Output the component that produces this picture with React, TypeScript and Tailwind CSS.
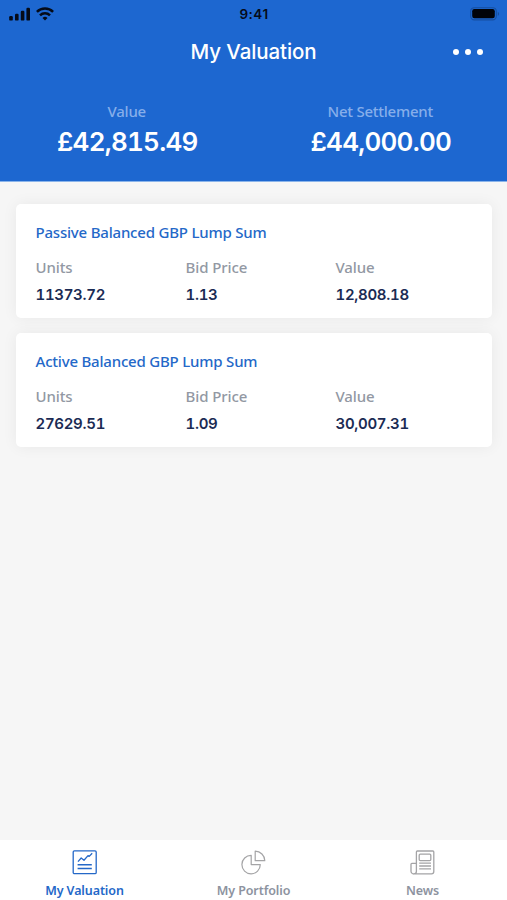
const holdings = [
  { name: "Passive Balanced GBP Lump Sum", units: "11373.72", price: "1.13", value: "12,808.18" },
  { name: "Active Balanced GBP Lump Sum", units: "27629.51", price: "1.09", value: "30,007.31" },
];

function StatusBar() {
  return (
    <div className="grid h-7 grid-cols-3 items-center pl-[9px] pr-[7px] font-['Inter',sans-serif] text-[#050b18]">
      <div className="flex items-center gap-[5px]">
        <svg className="h-[14px] w-[22px]" viewBox="0 0 22 14" fill="currentColor">
          <rect x="0.2" y="9" width="3.6" height="4.6" rx="1.2" />
          <rect x="6" y="6.8" width="3.6" height="6.8" rx="1.2" />
          <rect x="11.8" y="3.8" width="3.6" height="9.8" rx="1.2" />
          <rect x="17.4" y="0.8" width="3.6" height="12.8" rx="1.2" />
        </svg>
        <svg className="h-[14px] w-[18px]" viewBox="0 0 18 14" fill="none" stroke="currentColor" strokeWidth="2.5">
          <path d="M0.9 4.9a11.5 11.5 0 0 1 16.2 0" />
          <path d="M4 8.3a7.1 7.1 0 0 1 10 0" />
          <path d="M9 13.5l-2.5-2.6a3.6 3.6 0 0 1 5 0z" fill="currentColor" stroke="none" />
        </svg>
      </div>
      <div className="-ml-px text-center text-[13.5px] font-semibold tracking-[0.5px]">9:41</div>
      <svg className="h-[14px] w-[30px] justify-self-end" viewBox="0 0 30 14">
        <rect x="0.7" y="0.7" width="25.6" height="12.2" rx="3.6" fill="none" stroke="#164f9f" strokeWidth="1.1" />
        <rect x="2.2" y="2.1" width="22.6" height="9.2" rx="2.2" fill="#010308" />
        <path d="M27.8 4.8v4.2c1.8-.8 1.8-3.4 0-4.2z" fill="#164f9f" />
      </svg>
    </div>
  );
}

function ChartIcon() {
  return (
    <svg className="h-[25px] w-[25px]" viewBox="0 0 25 25" fill="none" stroke="currentColor" strokeWidth="1.3" strokeLinejoin="round">
      <rect x="1.2" y="0.9" width="23" height="22.8" rx="1.2" />
      <path d="M6 11.6l3.2-3.6 2.8 2.2 4-4.6 1.2.8 3-3.2" />
      <path d="M5.6 14.8h14.2M5.6 18.5h14.2" strokeWidth="1.5" />
    </svg>
  );
}

function PieIcon() {
  return (
    <svg className="h-[25px] w-[25px]" viewBox="0 0 25 25" fill="none" stroke="currentColor" strokeWidth="1.2" strokeLinejoin="round">
      <path d="M10.2 5.4v9.2h9.1a9.2 9.2 0 1 1-9.1-9.2z" />
      <path d="M14.2 1.2v9.5h9.6a9.6 9.6 0 0 0-9.6-9.5z" />
    </svg>
  );
}

function NewsIcon() {
  return (
    <svg className="h-[25px] w-[25px]" viewBox="0 0 25 25" fill="none" stroke="currentColor" strokeWidth="1.3" strokeLinejoin="round">
      <path d="M6.4 21.2V2a1 1 0 0 1 1-1h15.4a1 1 0 0 1 1 1v19.5a2.3 2.3 0 0 1-2.3 2.3H3.8a2.6 2.6 0 0 0 2.6-2.6z" />
      <path d="M6.4 13.4H1.9a.9.9 0 0 0-.9.9v6.9a2.6 2.6 0 0 0 2.8 2.6" />
      <rect x="9.2" y="4.2" width="11.6" height="6.4" rx="1" />
      <path d="M9.2 13.2h11.8M9.2 16h11.8M9.2 18.8h11.8" />
    </svg>
  );
}

function Field({ label, value }: { label: string; value: string }) {
  return (
    <div className="w-[150px] shrink-0">
      <div className="text-[15px] leading-5 font-medium tracking-[-0.1px] text-[#9298a3]">{label}</div>
      <div className="mt-[8px] font-['Inter',sans-serif] text-[15px] leading-5 font-semibold tracking-[-0.3px] text-[#1b2b54] tabular-nums">{value}</div>
    </div>
  );
}

function Total({ label, value }: { label: string; value: string }) {
  return (
    <div>
      <div className="text-[15px] leading-5 font-medium tracking-[-0.25px] text-[#86aeea]">{label}</div>
      <div className="mt-[5px] ml-px font-['Inter',sans-serif] text-[26px] leading-8 font-semibold tracking-[-0.75px] tabular-nums">{value}</div>
    </div>
  );
}

export default function App() {
  return (
    <div className="flex h-[900px] w-full flex-col bg-[#f6f6f6] font-['Noto_Sans',sans-serif]">
      {/* Header */}
      <header className="h-[182px] shrink-0 border-b border-[#8ab4ea] bg-[#1d67d0] text-white">
        <StatusBar />
        <div className="grid h-12 grid-cols-[1fr_auto_1fr] items-center">
          <h1 className="col-start-2 font-['Inter',sans-serif] text-[20.5px] font-medium tracking-[-0.1px]">My Valuation</h1>
          <div className="mr-[24px] flex gap-[5.5px] justify-self-end">
            <span className="h-[6.5px] w-[6.5px] rounded-full bg-white" />
            <span className="h-[6.5px] w-[6.5px] rounded-full bg-white" />
            <span className="h-[6.5px] w-[6.5px] rounded-full bg-white" />
          </div>
        </div>
        <div className="mt-[25px] grid grid-cols-2 text-center">
          <Total label="Value" value="£42,815.49" />
          <Total label="Net Settlement" value="£44,000.00" />
        </div>
      </header>

      {/* Holdings */}
      <main className="flex flex-1 flex-col gap-[15px] pt-[22px] pr-[15px] pl-[15.5px]">
        {holdings.map((h) => (
          <section key={h.name} className="h-[114px] rounded-[5px] bg-white px-5 pt-[18px] shadow-[0_0_15px_rgba(0,0,0,0.06)]">
            <h2 className="text-[15px] leading-5 font-medium tracking-[-0.2px] text-[#2468c8]">{h.name}</h2>
            <div className="mt-[15px] flex">
              <Field label="Units" value={h.units} />
              <Field label="Bid Price" value={h.price} />
              <Field label="Value" value={h.value} />
            </div>
          </section>
        ))}
      </main>

      {/* Tab bar */}
      <nav className="grid h-[60px] shrink-0 grid-cols-3 bg-white text-[12.5px] leading-4 font-semibold tracking-[-0.1px]">
        <div className="flex flex-col items-center gap-[8px] pt-[10px] text-[#2468c8]">
          <ChartIcon />
          My Valuation
        </div>
        <div className="flex flex-col items-center gap-[8px] pt-[10px] text-[#8d93a0]">
          <span className="text-[#a4a4a6]"><PieIcon /></span>
          My Portfolio
        </div>
        <div className="flex flex-col items-center gap-[8px] pt-[10px] text-[#8d93a0]">
          <span className="text-[#a4a4a6]"><NewsIcon /></span>
          News
        </div>
      </nav>
    </div>
  );
}
